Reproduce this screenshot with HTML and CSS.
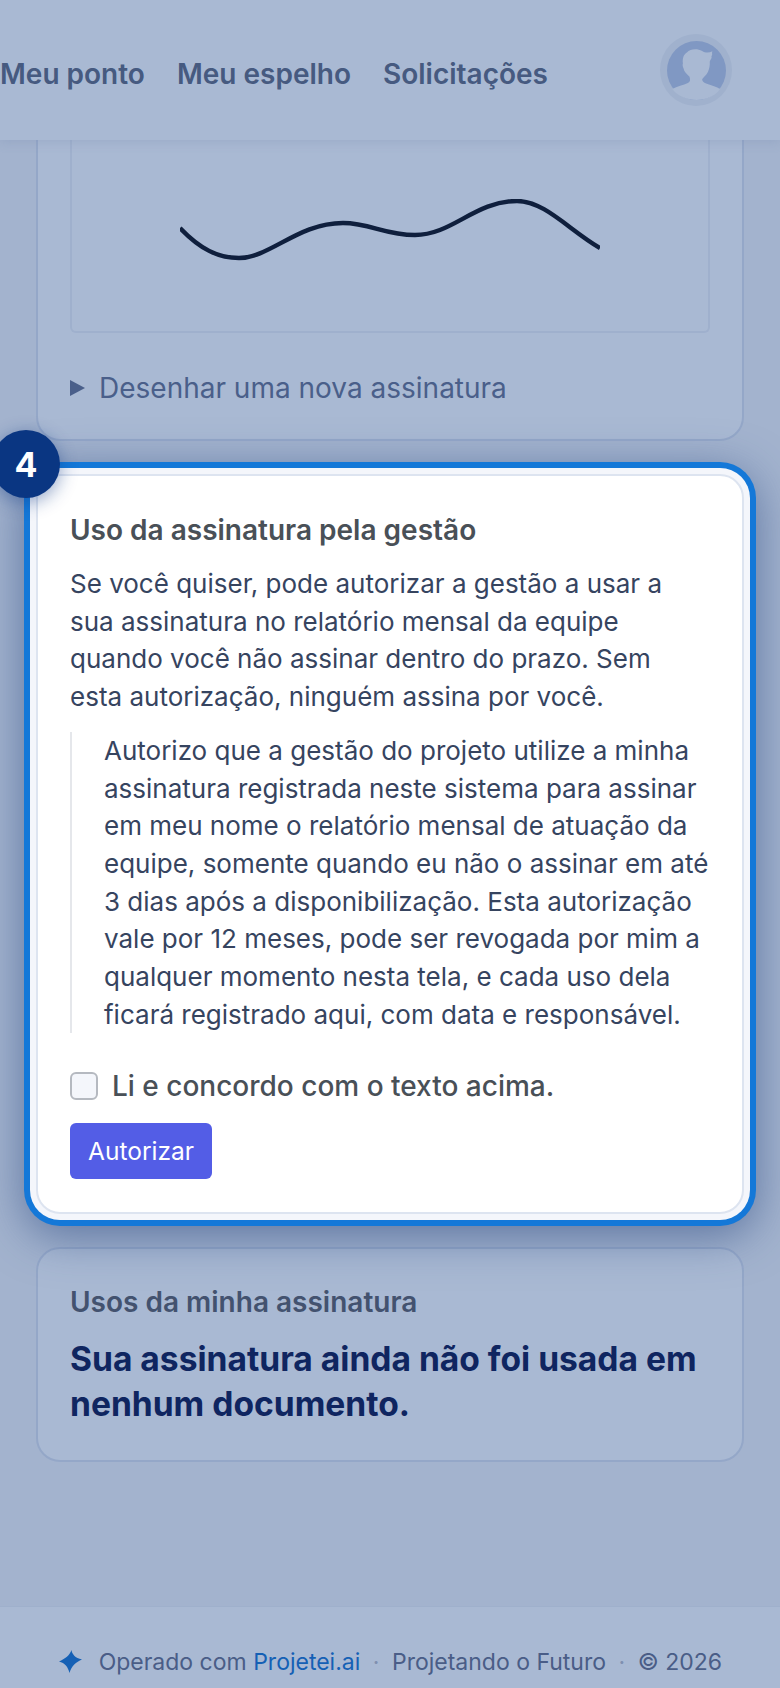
FILE: index.html
```html
<!DOCTYPE html>
<html lang="pt-BR">
<head>
    <meta charset="UTF-8">
    <title>Minha assinatura</title>
    <link rel="stylesheet" href="styles.css">
</head>
<body>
    <header class="topbar">
        <nav class="topnav">
            <a href="#">Meu ponto</a>
            <a href="#">Meu espelho</a>
            <a href="#">Solicitações</a>
        </nav>
        <div class="avatar">
            <svg viewBox="80 60 178 178" width="59" height="59">
                <circle cx="169" cy="149" r="89" fill="#8098c3"/>
                <path fill="#a9b9d3" d="M128 128 C126 112 131 100 140 95 C150 84 170 82 186 90 C195 96 206 97 217 91 C214 98 219 100 214 106 C217 110 211 116 209 122 C210 134 207 146 204 152 C198 165 190 168 186 176 C186 182 192 186 200 189 C215 194 230 199 240 205 C225 228 195 238 169 238 C143 238 113 228 96 205 C110 197 130 193 143 187 C150 184 151 178 148 168 C140 160 131 152 130 143 C128 138 126 133 128 128 Z"/>
            </svg>
        </div>
    </header>

    <main class="content">
        <section class="card card-cut">
            <div class="sig-box">
                <svg class="sig" viewBox="0 -2 420 62" width="420" height="62">
                    <path d="M0 27 C20 48 38 57 59 57 C90 57 118 22 163 22 C190 22 205 34 235 34 C272 34 295 0 337 0 C365 0 390 30 420 47" fill="none" stroke="#0f1f3d" stroke-width="4.4"/>
                </svg>
            </div>
            <details class="new-sig">
                <summary>Desenhar uma nova assinatura</summary>
            </details>
        </section>

        <section class="card card-focus">
            <span class="step-badge">4</span>
            <h2 class="card-title">Uso da assinatura pela gestão</h2>
            <p class="intro">Se você quiser, pode autorizar a gestão a usar a sua assinatura no relatório mensal da equipe quando você não assinar dentro do prazo. Sem esta autorização, ninguém assina por você.</p>
            <blockquote class="terms">Autorizo que a gestão do projeto utilize a minha assinatura registrada neste sistema para assinar em meu nome o relatório mensal de atuação da equipe, somente quando eu não o assinar em até 3 dias após a disponibilização. Esta autorização vale por 12 meses, pode ser revogada por mim a qualquer momento nesta tela, e cada uso dela ficará registrado aqui, com data e responsável.</blockquote>
            <label class="agree">
                <input type="checkbox">
                <span>Li e concordo com o texto acima.</span>
            </label>
            <button class="btn-primary" type="button">Autorizar</button>
        </section>

        <section class="card card-uses">
            <h2 class="card-title">Usos da minha assinatura</h2>
            <p class="empty">Sua assinatura ainda não foi usada em nenhum documento.</p>
        </section>
    </main>

    <footer class="footer">
        <svg class="spark" viewBox="0 0 24 24" width="24" height="24">
            <path fill="#1560b5" d="M12.5 0 C13 4 16 8 23 9.5 C17 12 12.5 16 10.5 23 C9 17 6 13 0 11.5 C6 9 11 5 12.5 0 Z"/>
        </svg>
        <span>Operado com <a href="#">Projetei.ai</a></span>
        <span class="dot">·</span>
        <span>Projetando o Futuro</span>
        <span class="dot">·</span>
        <span>© 2026</span>
    </footer>
</body>
</html>
```

FILE: styles.css
```css
* {
    box-sizing: border-box;
}
html, body {
    margin: 0;
    height: 1688px;
    overflow: hidden;
}
body {
    display: flex;
    flex-direction: column;
    font-family: Inter, "Noto Sans", sans-serif;
    background: #a3b3ce;
    color: #36445f;
}

.topbar {
    position: relative;
    z-index: 2;
    flex: none;
    height: 140px;
    display: flex;
    align-items: center;
    justify-content: space-between;
    padding-right: 48px;
    background: #a9b9d3;
    box-shadow: 0 2px 10px rgba(110, 130, 170, 0.25);
}
.topnav {
    display: flex;
    gap: 32px;
    padding-top: 8px;
}
.topnav a {
    font-size: 28px;
    font-weight: 600;
    color: #465a80;
    text-decoration: none;
}
.avatar {
    width: 72px;
    height: 72px;
    border-radius: 50%;
    background: #a0b1cd;
    display: flex;
    align-items: center;
    justify-content: center;
}

.content {
    flex: 1;
    padding: 0 36px;
}
.card {
    border: 2px solid #94a7c8;
    border-radius: 24px;
    background: #a9b9d3;
}
.card-cut {
    height: 301px;
    padding: 0 32px;
    border-top: none;
    border-radius: 0 0 24px 24px;
}
.sig-box {
    height: 193px;
    border: 2px solid #9fb0cd;
    border-top: none;
    border-radius: 0 0 6px 6px;
    padding: 59px 0 0 108px;
}
.sig {
    display: block;
}
.new-sig {
    margin-top: 38px;
    font-size: 28px;
    color: #4a5f8a;
}
.new-sig summary {
    display: flex;
    align-items: center;
    gap: 14px;
    list-style: none;
}
.new-sig summary::before {
    content: "";
    border-left: 15px solid #4a5f8a;
    border-top: 8px solid transparent;
    border-bottom: 8px solid transparent;
}

.card-focus {
    position: relative;
    z-index: 1;
    height: 740px;
    margin-top: 33px;
    padding: 36px 32px 0;
    background: #fff;
    border-color: #dde4f0;
    box-shadow: 0 0 0 6px #f4f6fb, 0 0 0 12px #1478d8, 0 10px 46px 12px rgba(45, 75, 130, 0.6);
}
.step-badge {
    position: absolute;
    left: -46px;
    top: -46px;
    width: 68px;
    height: 68px;
    border-radius: 50%;
    background: #0a3682;
    color: #fff;
    font-size: 34px;
    font-weight: 700;
    display: flex;
    align-items: center;
    justify-content: center;
    box-shadow: 0 4px 18px rgba(10, 54, 130, 0.45);
}
.card-title {
    margin: 0;
    font-size: 28px;
    line-height: 36px;
    font-weight: 600;
    color: #495057;
}
.intro {
    margin: 17px 0 0;
    font-size: 26px;
    line-height: 37.7px;
}
.terms {
    margin: 16px 0 0;
    padding-left: 32px;
    border-left: 2px solid #e5e7eb;
    font-size: 26px;
    line-height: 37.7px;
}
.agree {
    display: flex;
    align-items: center;
    gap: 14px;
    margin-top: 36px;
    font-size: 28px;
    font-weight: 500;
    color: #495057;
}
.agree input {
    appearance: none;
    width: 28px;
    height: 28px;
    margin: 0;
    border: 2px solid #b5b9c0;
    border-radius: 6px;
    background: #f4f6fb;
}
.btn-primary {
    display: block;
    width: 142px;
    height: 56px;
    margin-top: 20px;
    border: none;
    border-radius: 6px;
    background: #535de6;
    color: #fff;
    font-family: inherit;
    font-size: 24.5px;
}

.card-uses {
    height: 215px;
    margin-top: 33px;
    padding: 35px 32px 0;
}
.card-uses .card-title {
    color: #43526f;
}
.empty {
    margin: 16px 0 0;
    font-size: 33.6px;
    line-height: 45px;
    font-weight: 700;
    color: #0f2560;
}

.footer {
    flex: none;
    height: 82px;
    display: flex;
    align-items: center;
    justify-content: flex-end;
    gap: 12.5px;
    padding: 28px 58px 0 0;
    background: #a9b9d3;
    border-top: 1px solid #9fb0cc;
    font-size: 23px;
    color: #4a5d87;
}
.footer a {
    color: #1560b5;
    text-decoration: none;
}
.footer .dot {
    color: #7f90b0;
}
.spark {
    flex: none;
    margin-right: 3px;
}
```
